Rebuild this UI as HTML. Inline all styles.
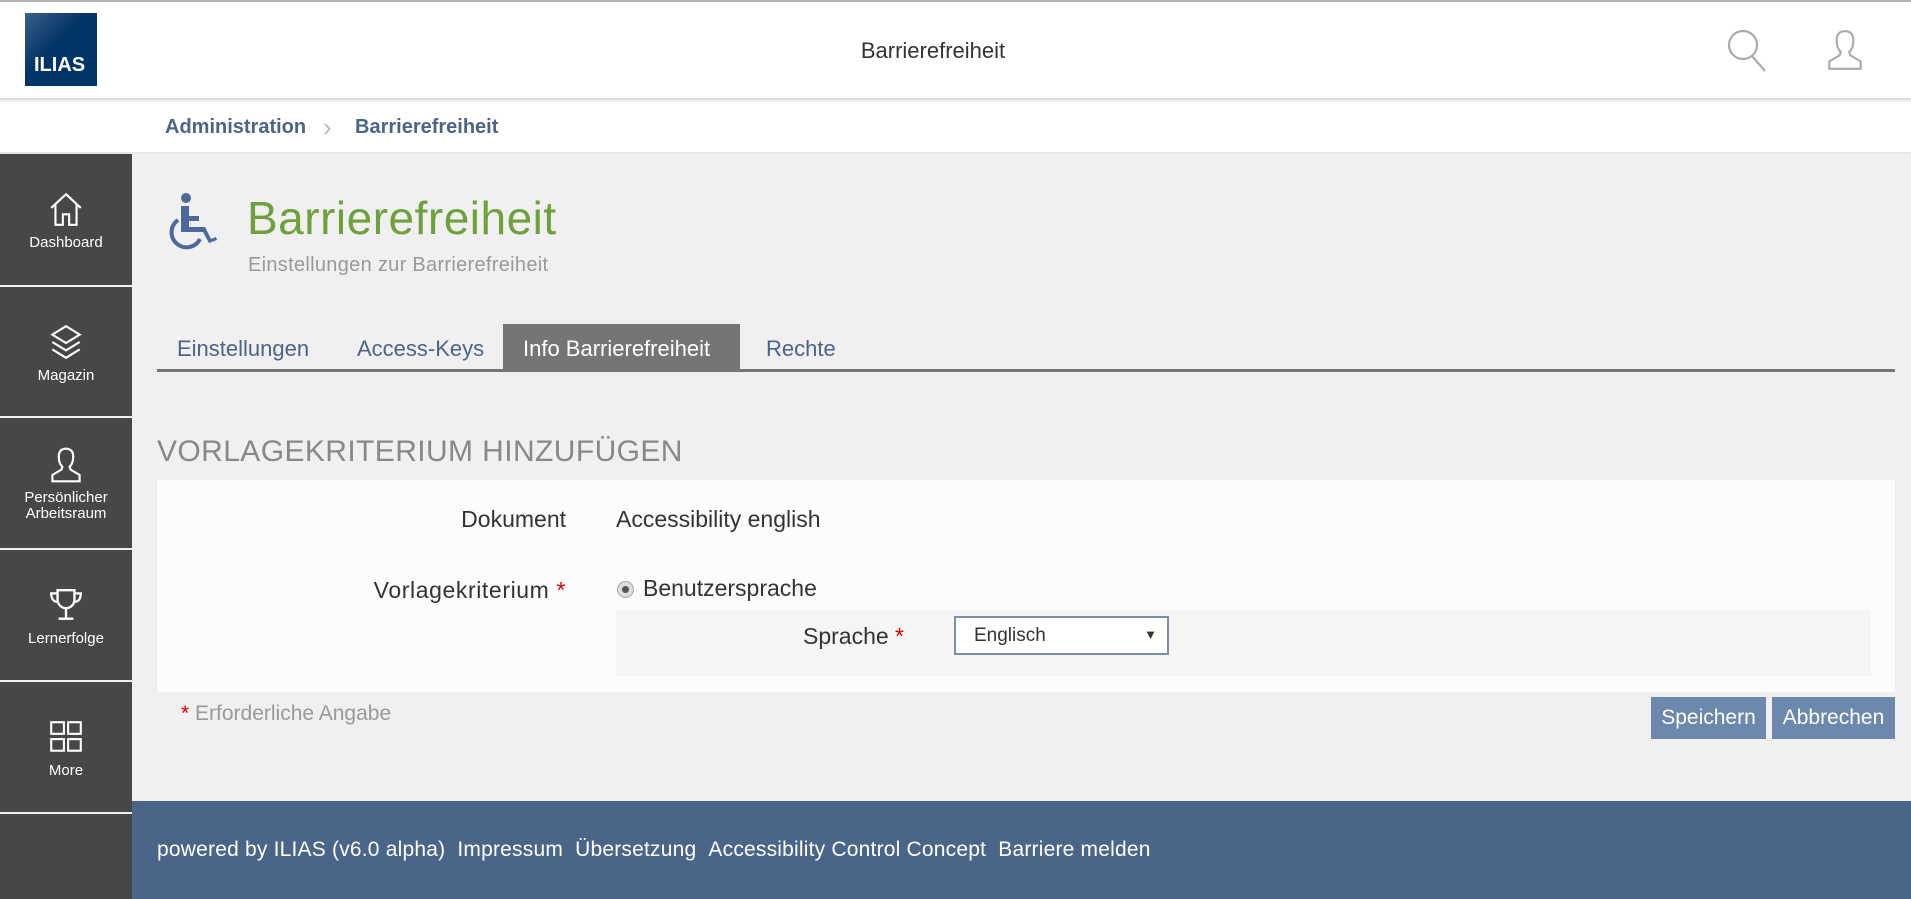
<!DOCTYPE html>
<html><head><meta charset="utf-8"><style>
*{margin:0;padding:0;box-sizing:border-box}
body{width:1911px;height:899px;overflow:hidden;background:#f0f0f0;font-family:"Liberation Sans",sans-serif;position:relative}
.a{position:absolute;white-space:nowrap}
.side{position:absolute;left:0;width:132px;background:#474747;color:#fff;text-align:center;font-size:15px}
.side svg{display:block;margin:0 auto}
</style></head><body>
<div class="a" style="left:0;top:0;width:1911px;height:100px;background:#fff;border-top:2px solid #b5b5b5;border-bottom:2px solid #ddd"></div>
<div class="a" style="left:25px;top:13px;width:72px;height:73px;background:linear-gradient(135deg,#3a5f8a,#003366 45%);color:#fff;font-weight:bold;font-size:20px;padding:41px 0 0 9px">ILIAS</div>
<div class="a" style="left:0;top:38px;width:1866px;text-align:center;font-size:22px;color:#333">Barrierefreiheit</div>
<svg class="a" style="left:1725px;top:28px" width="52" height="44" viewBox="0 0 52 44"><circle cx="18" cy="17" r="14" fill="none" stroke="#aaa" stroke-width="2.2"/><line x1="27" y1="28" x2="40" y2="43" stroke="#aaa" stroke-width="2.2"/></svg>
<svg class="a" style="left:1824px;top:28px" width="42" height="44" viewBox="0 0 40 42"><path d="M20 3c-6 0-8 4-8 9 0 5 2 9 4 11l-1 3-10 6v7h30v-7l-10-6-1-3c2-2 4-6 4-11 0-5-2-9-8-9z" fill="none" stroke="#aaa" stroke-width="2"/></svg>
<div class="a" style="left:0;top:102px;width:1911px;height:52px;background:#fff;border-bottom:2px solid #e6e6e6"></div>
<div class="a" style="left:165px;top:116px;font-size:20px;color:#4b6488;font-weight:bold">Administration</div>
<div class="a" style="left:323px;top:112px;font-size:26px;color:#bbb">&#x203A;</div>
<div class="a" style="left:355px;top:116px;font-size:20px;color:#4b6488;font-weight:bold">Barrierefreiheit</div>

<div class="side" style="top:154px;height:131px;padding-top:36px"><svg width="38" height="38" viewBox="0 0 36 36"><path d="M4 17L18 4l14 13M8 14v19h7V23h6v10h7V14" fill="none" stroke="#fff" stroke-width="2"/></svg><div style="margin-top:6px">Dashboard</div></div>
<div class="side" style="top:287px;height:129px;padding-top:36px"><svg width="38" height="38" viewBox="0 0 36 36"><path d="M18 3L5 11l13 8 13-8z M5 18l13 8 13-8 M5 25l13 8 13-8" fill="none" stroke="#fff" stroke-width="2"/></svg><div style="margin-top:6px">Magazin</div></div>
<div class="side" style="top:418px;height:130px;padding-top:28px"><svg width="38" height="38" viewBox="0 0 40 42"><path d="M20 3c-6 0-8 4-8 9 0 5 2 9 4 11l-1 3-10 6v7h30v-7l-10-6-1-3c2-2 4-6 4-11 0-5-2-9-8-9z" fill="none" stroke="#fff" stroke-width="2.4"/></svg><div style="margin-top:6px;line-height:16px">Persönlicher<br>Arbeitsraum</div></div>
<div class="side" style="top:550px;height:130px;padding-top:36px"><svg width="38" height="38" viewBox="0 0 36 36"><path d="M10 4h16v9a8 8 0 0 1-16 0z M10 7H4c0 6 3 8 6 8 M26 7h6c0 6-3 8-6 8 M18 21v9 M11 31h14" fill="none" stroke="#fff" stroke-width="2.2"/></svg><div style="margin-top:6px">Lernerfolge</div></div>
<div class="side" style="top:682px;height:130px;padding-top:36px"><svg width="38" height="38" viewBox="0 0 36 36"><rect x="4" y="4" width="12" height="11" fill="none" stroke="#fff" stroke-width="2"/><rect x="20" y="4" width="12" height="11" fill="none" stroke="#fff" stroke-width="2"/><rect x="4" y="20" width="12" height="11" fill="none" stroke="#fff" stroke-width="2"/><rect x="20" y="20" width="12" height="11" fill="none" stroke="#fff" stroke-width="2"/></svg><div style="margin-top:6px">More</div></div>
<div class="side" style="top:814px;height:85px"></div>

<svg class="a" style="left:168px;top:190px" width="52" height="62" viewBox="0 0 52 62"><circle cx="18" cy="8" r="5" fill="#4b6a9b"/><path d="M13 16h8v10h10v5H21v6h16l6 12 5-2 1 3-8 3-6-11H13z" fill="#4b6a9b"/><path d="M10 30a15 15 0 1 0 22 19" fill="none" stroke="#4b6a9b" stroke-width="4"/></svg>
<div class="a" style="left:247px;top:191px;font-size:46px;color:#6ea03c;letter-spacing:0.5px">Barrierefreiheit</div>
<div class="a" style="left:248px;top:254px;font-size:20px;color:#999;letter-spacing:0.3px">Einstellungen zur Barrierefreiheit</div>

<div class="a" style="left:503px;top:324px;width:237px;height:45px;background:#757575"></div>
<div class="a" style="left:157px;top:369px;width:1738px;height:3px;background:#757575"></div>
<div class="a" style="left:177px;top:336px;font-size:22px;color:#4b6488">Einstellungen</div>
<div class="a" style="left:357px;top:336px;font-size:22px;color:#4b6488">Access-Keys</div>
<div class="a" style="left:523px;top:336px;font-size:22px;color:#fff">Info Barrierefreiheit</div>
<div class="a" style="left:766px;top:336px;font-size:22px;color:#4b6488">Rechte</div>

<div class="a" style="left:157px;top:435px;font-size:30px;color:#888;letter-spacing:0.4px">VORLAGEKRITERIUM HINZUFÜGEN</div>
<div class="a" style="left:157px;top:480px;width:1738px;height:212px;background:#fcfcfc"></div>
<div class="a" style="left:0;top:506px;width:566px;text-align:right;font-size:23px;color:#333">Dokument</div>
<div class="a" style="left:616px;top:506px;font-size:23px;color:#333">Accessibility english</div>
<div class="a" style="left:0;top:577px;width:566px;text-align:right;font-size:23px;color:#333;letter-spacing:0.6px">Vorlagekriterium <span style="color:#d00">*</span></div>
<div class="a" style="left:617px;top:581px;width:17px;height:17px;border-radius:50%;border:1px solid #aaa;background:#ddd"><div style="margin:4px;width:7px;height:7px;border-radius:50%;background:#555"></div></div>
<div class="a" style="left:643px;top:575px;font-size:23px;color:#333">Benutzersprache</div>
<div class="a" style="left:616px;top:610px;width:1255px;height:66px;background:#f5f5f5"></div>
<div class="a" style="left:0;top:623px;width:904px;text-align:right;font-size:23px;color:#333">Sprache <span style="color:#d00">*</span></div>
<div class="a" style="left:954px;top:616px;width:215px;height:39px;border:2px solid #7a8fa6;background:#fff;font-size:19px;color:#333;padding:7px 0 0 18px">Englisch<span style="position:absolute;right:10px;top:9px;font-size:13px">&#9660;</span></div>
<div class="a" style="left:181px;top:702px;font-size:21px;color:#999"><span style="color:#d00">*</span> Erforderliche Angabe</div>
<div class="a" style="left:1651px;top:697px;width:115px;height:42px;background:#6c88ad;color:#fff;font-size:21px;text-align:center;line-height:42px">Speichern</div>
<div class="a" style="left:1772px;top:697px;width:123px;height:42px;background:#6c88ad;color:#fff;font-size:21px;text-align:center;line-height:42px">Abbrechen</div>

<div class="a" style="left:132px;top:801px;width:1779px;height:98px;background:#4b6588"></div>
<div class="a" style="left:157px;top:838px;font-size:21px;color:#fff;letter-spacing:0.2px">powered by ILIAS (v6.0 alpha) &nbsp;Impressum &nbsp;Übersetzung &nbsp;Accessibility Control Concept &nbsp;Barriere melden</div>
</body></html>
